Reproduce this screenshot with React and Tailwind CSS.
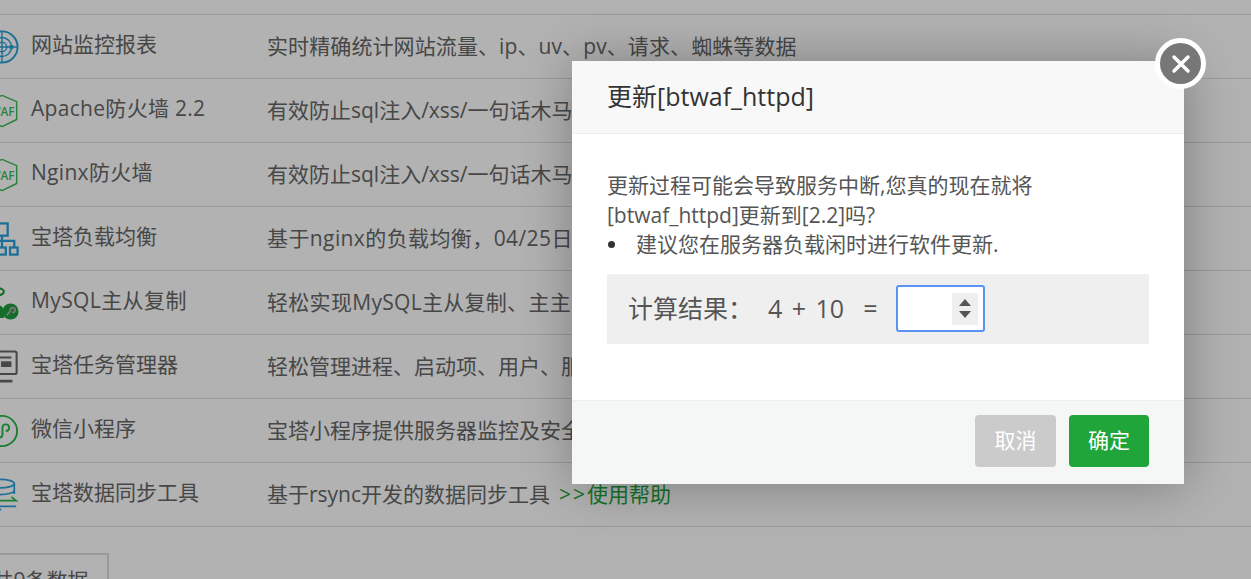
import { useState } from "react";

const fontStack = "font-['Open_Sans','Noto_Sans_CJK_SC',sans-serif]";

const RadarIcon = () => (
  <svg width="34" height="34" viewBox="0 0 36 36" fill="none" stroke="#2b9fd8" strokeWidth="1.500">
    <circle cx="18" cy="18" r="16.500" strokeWidth="2" />
    <circle cx="18" cy="18" r="10" />
    <circle cx="18" cy="18" r="5" />
    <path d="M2 18h32M18 2v32" />
    <circle cx="28" cy="18" r="2.400" fill="#2b9fd8" stroke="none" />
  </svg>
);

const WafIcon = () => (
  <svg width="34" height="34" viewBox="0 0 36 36" fill="none">
    <path d="M18 1.500 33.500 8v19L18 34.500 2.500 27V8z" stroke="#3cb95a" strokeWidth="1.500" strokeLinejoin="round" />
    <text x="18" y="23" textAnchor="middle" fontSize="12.500" fontWeight="600" fill="#3cb95a" fontFamily="Open Sans, sans-serif">WAF</text>
  </svg>
);

const BalanceIcon = () => (
  <svg width="34" height="34" viewBox="0 0 36 36" fill="none" stroke="#2b9fd8" strokeWidth="2.400">
    <rect x="11" y="1.500" width="13" height="13" />
    <path d="M18 14.500V20M6 27v-7h25v7M18 20v7" />
    <rect x="1.500" y="27" width="8" height="7.500" />
    <rect x="14" y="27" width="8" height="7.500" />
    <rect x="26.500" y="27" width="8" height="7.500" />
  </svg>
);

const MysqlIcon = () => (
  <svg width="34" height="34" viewBox="0 0 36 36" fill="none">
    <path d="M12 2c5 0 8 2 8 4s-3 4-7 4-6 2-6 4 3 3 7 3" stroke="#1e9c3c" strokeWidth="2.200" />
    <path d="M1 34c1-8 6-14 11-14s7 3 8 5v9z" fill="#1e9c3c" />
    <circle cx="27" cy="27" r="8.500" fill="#1e9c3c" />
    <path d="M23 31l4-4.500M27 26.500a2.600 2.600 0 1 1 2 1.500" stroke="#b2b2b2" strokeWidth="1.800" />
  </svg>
);

const TaskIcon = () => (
  <svg width="34" height="34" viewBox="0 0 36 36" fill="none" stroke="#666" strokeWidth="2.200">
    <rect x="1.500" y="1.500" width="32" height="24" rx="2" />
    <path d="M14 8h14M2 14h10M2 20h12" />
    <rect x="17" y="12" width="11" height="6" fill="#666" stroke="none" />
    <path d="M14 26v6M3 33h26" strokeWidth="3" />
  </svg>
);

const WechatIcon = () => (
  <svg width="34" height="34" viewBox="0 0 36 36" fill="none" stroke="#25b84a" strokeWidth="2">
    <circle cx="18" cy="18" r="16" />
    <path d="M12 20.500v2a3.500 3.500 0 0 0 3 2.500c2 0 3.500-1.500 3.500-3.500v-7c0-2 1.500-3.500 3.500-3.500s3.500 1.500 3.500 3.500-1.500 3.500-3.500 3.500" />
    <path d="M12 21c0-2 1-3.500 3-3.500" />
  </svg>
);

const SyncIcon = () => (
  <svg width="34" height="34" viewBox="0 0 36 36" fill="none" stroke="#2b9fd8" strokeWidth="1.800">
    <ellipse cx="16" cy="6" rx="15" ry="4.500" />
    <path d="M1 6v20c0 2 3 4 9 4M31 6v11M1 13c0 2.500 6 4.500 15 4.500S31 15.500 31 13M1 20c0 2 4 4 10 4" />
    <path d="M12 24h21l-5-4" stroke="#25b84a" />
    <path d="M33 30H12l5 4" stroke="#2b9fd8" />
  </svg>
);

const rows = [
  { name: "网站监控报表", desc: "实时精确统计网站流量、ip、uv、pv、请求、蜘蛛等数据", descClass: "tracking-[0.1px]", icon: <RadarIcon /> },
  { name: "Apache防火墙 2.2", nameClass: "tracking-[0.3px]", desc: "有效防止sql注入/xss/一句话木马", icon: <WafIcon /> },
  { name: "Nginx防火墙", nameClass: "tracking-[0.3px]", desc: "有效防止sql注入/xss/一句话木马", icon: <WafIcon /> },
  { name: "宝塔负载均衡", desc: "基于nginx的负载均衡，04/25日", descClass: "tracking-[0.4px]", icon: <BalanceIcon /> },
  { name: "MySQL主从复制", nameClass: "tracking-[0.4px]", desc: "轻松实现MySQL主从复制、主主", descClass: "tracking-[0.3px]", icon: <MysqlIcon /> },
  { name: "宝塔任务管理器", desc: "轻松管理进程、启动项、用户、服", icon: <TaskIcon /> },
  { name: "微信小程序", desc: "宝塔小程序提供服务器监控及安全", icon: <WechatIcon /> },
  { name: "宝塔数据同步工具", desc: "基于rsync开发的数据同步工具", icon: <SyncIcon />, help: true },
];

const PluginRow = ({ row }) => (
  <div className="flex h-16 items-center border-b border-[#ddd] text-[21px] text-[#666]">
    <div className="-ml-[15px] mr-[12px] w-[34px] shrink-0">{row.icon}</div>
    <div className={`w-[236px] shrink-0 -translate-y-[2px] ${row.nameClass || ""}`}>{row.name}</div>
    <div className={`whitespace-nowrap ${row.descClass || ""}`}>
      {row.desc}
      {row.help && (
        <a className="ml-[9px] text-[#20a53a]">
          <span className="tracking-[2px]">&gt;&gt;</span>使用帮助
        </a>
      )}
    </div>
  </div>
);

export default function App() {
  const [answer, setAnswer] = useState("");

  return (
    <div className={`relative h-[579px] w-[1251px] overflow-hidden bg-white ${fontStack}`}>
      {/* page behind the dialog */}
      <div className="h-[15px] border-b border-[#ddd]" />
      {rows.map((row) => (
        <PluginRow key={row.name} row={row} />
      ))}
      <div className="mt-[26px] -ml-[20px] flex h-[56px] w-[129px] items-center justify-center border-2 border-[#ddd] pr-2 text-[21px] whitespace-nowrap text-[#666]">
        共9条数据
      </div>

      <div className="absolute inset-0 bg-black/30" />

      {/* update dialog */}
      <div className="absolute left-[572px] top-[61px] flex h-[423px] w-[612px] flex-col bg-white shadow-[1px_1px_50px_rgba(0,0,0,0.3)]">
        <div className="flex h-[73px] shrink-0 items-center border-b border-[#eee] bg-[#f8f8f8] pl-[35px] text-[25px] text-[#333]">
          更新[btwaf_httpd]
        </div>
        <div className="flex-1 px-[35px] pt-[37px] text-[21px] leading-[29.500px] text-[#555]">
          <p>更新过程可能会导致服务中断,您真的现在就将</p>
          <p>[btwaf_httpd]更新到[2.2]吗?</p>
          <div className="flex items-center">
            <span className="ml-[1px] mr-[21px] h-[7px] w-[7px] rounded-full bg-[#333]" />
            <span>建议您在服务器负载闲时进行软件更新.</span>
          </div>
          <div className="mt-[14px] flex h-[70px] items-center bg-[#efefef] pl-[21px] text-[25px] text-[#555]">
            <span className="w-[140px]">计算结果：</span>
            <span className="[word-spacing:3px]">4 + 10</span>
            <span className="ml-[19px]">=</span>
            <div className="ml-[19px] flex h-[47px] w-[89px] items-center justify-end rounded-[3px] border-2 border-[#5b93f5] bg-white pr-[5px]">
              <input
                value={answer}
                onChange={(e) => setAnswer(e.target.value)}
                className="w-full min-w-0 bg-transparent pl-2 outline-none"
              />
              <div className="flex h-8 w-[26px] shrink-0 flex-col items-center justify-center gap-[5px] bg-[#efefef]">
                <span className="h-0 w-0 border-x-[6px] border-b-[7px] border-x-transparent border-b-[#555]" />
                <span className="h-0 w-0 border-x-[6px] border-t-[7px] border-x-transparent border-t-[#555]" />
              </div>
            </div>
          </div>
        </div>
        <div className="flex h-[84px] shrink-0 items-start justify-end gap-[13px] border-t border-[#eee] bg-[#f5f7f6] pt-[14px] pr-[35px]">
          <button className="h-[52px] w-[81px] rounded-[4px] bg-[#cbcbcb] text-[21px] text-white">取消</button>
          <button className="h-[52px] w-[80px] rounded-[4px] bg-[#20a53a] text-[21px] text-white">确定</button>
        </div>

        {/* round close button on the corner */}
        <button className="absolute -right-[22px] -top-[23px] flex h-[51px] w-[51px] items-center justify-center rounded-full border-[5px] border-white bg-[#777]">
          <svg width="22" height="22" viewBox="0 0 22 22" stroke="white" strokeWidth="3.500" strokeLinecap="round">
            <path d="M4 4l14 14M18 4 4 18" />
          </svg>
        </button>
      </div>
    </div>
  );
}
